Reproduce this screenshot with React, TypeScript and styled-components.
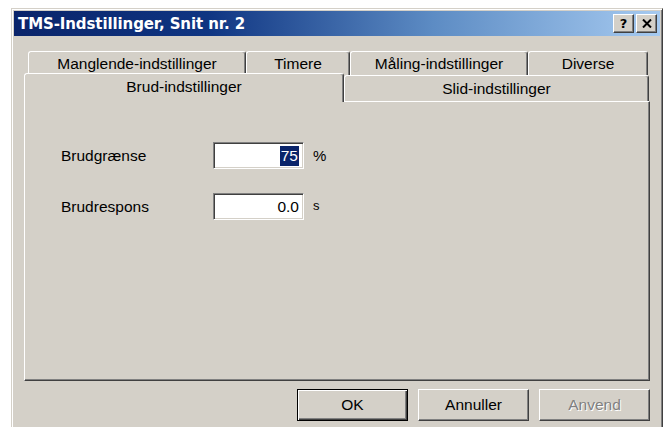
import React from 'react';
import styled, { createGlobalStyle } from 'styled-components';

const GlobalStyle = createGlobalStyle`
  html, body {
    margin: 0;
    padding: 0;
    background: #ffffff;
  }
  body {
    font-family: "Liberation Sans", Arial, sans-serif;
    color: #000;
  }
`;

const FACE = '#d4d0c8';
const SHADOW = '#808080';
const DARK = '#404040';

const Page = styled.div`
  width: 667px;
  height: 427px;
  padding: 8px 0 0 11px;
  box-sizing: border-box;
  overflow: hidden;
`;

const Window = styled.div`
  width: 652px;
  height: 432px;
  box-sizing: border-box;
  background: ${FACE};
  border: 1px solid;
  border-color: ${FACE} ${DARK} ${DARK} ${FACE};
  box-shadow: inset 1px 1px 0 #fff, inset -1px -1px 0 ${SHADOW};
  padding: 2px;
  display: flex;
  flex-direction: column;
`;

const TitleBar = styled.div`
  height: 25px;
  display: flex;
  align-items: center;
  padding: 0 3px 0 4px;
  background: linear-gradient(to right, #0a246a 0%, #0f3582 30%, #5d8cc4 65%, #a6caf0 100%);
`;

const Title = styled.div`
  flex: 1;
  color: #fff;
  font-family: "DejaVu Sans", Verdana, sans-serif;
  font-weight: bold;
  font-size: 15px;
  letter-spacing: -0.1px;
`;

const CaptionButton = styled.div<{ $gap?: boolean }>`
  width: 21px;
  height: 19px;
  box-sizing: border-box;
  margin-left: ${p => (p.$gap ? '2px' : '0')};
  background: ${FACE};
  border: 1px solid;
  border-color: #fff ${DARK} ${DARK} #fff;
  box-shadow: inset -1px -1px 0 ${SHADOW};
  display: flex;
  align-items: center;
  justify-content: center;
  font-family: "DejaVu Sans", Verdana, sans-serif;
  font-weight: bold;
  font-size: 13px;
  line-height: 1;
`;

const Body = styled.div`
  flex: 1;
  display: flex;
  flex-direction: column;
  padding: 15px 10px 0 10px;
`;

const TabStrip = styled.div`
  display: flex;
  flex-direction: column;
`;

const BackRow = styled.div`
  display: flex;
  height: 24px;
  margin: 0 2px 0 4px;
`;

const FrontRow = styled.div`
  display: flex;
  align-items: flex-end;
  height: 26px;
  margin-right: 1px;
`;

const Tab = styled.div<{ $w: number; $active?: boolean }>`
  width: ${p => p.$w}px;
  height: ${p => (p.$active ? '29px' : '100%')};
  margin-top: ${p => (p.$active ? '-2px' : '0')};
  margin-bottom: ${p => (p.$active ? '-1px' : '0')};
  position: relative;
  z-index: ${p => (p.$active ? 2 : 1)};
  box-sizing: border-box;
  background: ${FACE};
  border: 1px solid;
  border-bottom: none;
  border-color: #fff ${DARK} transparent #fff;
  border-radius: 3px 3px 0 0;
  box-shadow: inset -1px 0 0 ${SHADOW};
  display: flex;
  align-items: center;
  justify-content: center;
  padding-bottom: ${p => (p.$active ? '3px' : '0')};
  font-size: 15.5px;
  white-space: nowrap;
`;

const Panel = styled.div`
  height: 280px;
  box-sizing: border-box;
  background: ${FACE};
  border: 1px solid;
  border-color: #fff ${DARK} ${DARK} #fff;
  box-shadow: inset -1px -1px 0 ${SHADOW};
  padding: 40px 0 0 36px;
`;

const FieldGrid = styled.div`
  display: grid;
  grid-template-columns: 152px 91px auto;
  row-gap: 24px;
  align-items: center;
`;

const Label = styled.div`
  font-size: 15.5px;
`;

const Field = styled.div`
  width: 91px;
  height: 27px;
  box-sizing: border-box;
  background: #fff;
  border: 1px solid;
  border-color: ${SHADOW} #fff #fff ${SHADOW};
  box-shadow: inset 1px 1px 0 ${DARK}, inset -1px -1px 0 ${FACE};
  display: flex;
  align-items: center;
  justify-content: flex-end;
  padding-right: 4px;
  font-size: 15.5px;
`;

const Selected = styled.span`
  background: #0a246a;
  color: #fff;
  padding: 1px 1px;
`;

const Unit = styled.div<{ $small?: boolean }>`
  margin-left: 9px;
  font-size: ${p => (p.$small ? '13px' : '15px')};
  margin-top: ${p => (p.$small ? '-3px' : '0')};
`;

const ButtonRow = styled.div`
  display: flex;
  justify-content: flex-end;
  gap: 10px;
  margin-top: 8px;
`;

const Button = styled.div<{ $default?: boolean; $disabled?: boolean }>`
  width: 111px;
  height: 32px;
  box-sizing: border-box;
  background: ${FACE};
  border: 1px solid;
  border-color: ${p => (p.$default ? '#000' : `#fff ${DARK} ${DARK} #fff`)};
  box-shadow: ${p =>
    p.$default
      ? `inset 1px 1px 0 #fff, inset -1px -1px 0 ${DARK}, inset -2px -2px 0 ${SHADOW}`
      : `inset -1px -1px 0 ${SHADOW}`};
  display: flex;
  align-items: center;
  justify-content: center;
  font-size: 15.5px;
  color: ${p => (p.$disabled ? SHADOW : '#000')};
  text-shadow: ${p => (p.$disabled ? '1px 1px 0 #fff' : 'none')};
`;

const CloseGlyph = () => (
  <svg width="10" height="9" viewBox="0 0 10 9">
    <path d="M1 0.5 L9 8.5 M9 0.5 L1 8.5" stroke="#000" strokeWidth="2" />
  </svg>
);

export default function App() {
  return (
    <>
      <GlobalStyle />
      <Page>
        <Window>
          <TitleBar>
            <Title>TMS-Indstillinger, Snit nr. 2</Title>
            <CaptionButton>?</CaptionButton>
            <CaptionButton $gap>
              <CloseGlyph />
            </CaptionButton>
          </TitleBar>
          <Body>
            <TabStrip>
              <BackRow>
                <Tab $w={218}>Manglende-indstillinger</Tab>
                <Tab $w={104}>Timere</Tab>
                <Tab $w={178}>Måling-indstillinger</Tab>
                <Tab $w={120}>Diverse</Tab>
              </BackRow>
              <FrontRow>
                <Tab $w={320} $active>
                  Brud-indstillinger
                </Tab>
                <Tab $w={305}>Slid-indstillinger</Tab>
              </FrontRow>
            </TabStrip>
            <Panel>
              <FieldGrid>
                <Label>Brudgrænse</Label>
                <Field>
                  <Selected>75</Selected>
                </Field>
                <Unit>%</Unit>
                <Label>Brudrespons</Label>
                <Field>0.0</Field>
                <Unit $small>s</Unit>
              </FieldGrid>
            </Panel>
            <ButtonRow>
              <Button $default>OK</Button>
              <Button>Annuller</Button>
              <Button $disabled>Anvend</Button>
            </ButtonRow>
          </Body>
        </Window>
      </Page>
    </>
  );
}
